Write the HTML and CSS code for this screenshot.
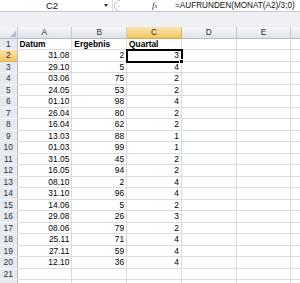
FILE: index.html
```html
<!DOCTYPE HTML>
<html lang="de">
    <head>
        <title>Quartal</title>
        <meta charset="UTF-8">
        <link rel="stylesheet" href="styles.css">
    </head>

    <body>
        <div class="sheet">
            <div class="formulaBar">
                <div class="nameBox"><span class="nameText">C2</span><span class="arrow"></span></div>
                <div class="splitter">
                    <svg width="12" height="12" viewBox="0 0 12 12">
                        <path d="M7 0.5 A5.5 5.5 0 0 0 7 11.5" fill="none" stroke="#b9bec5" stroke-width="1"/>
                        <circle cx="6" cy="6" r="0.7" fill="#b0b5bc"/>
                    </svg>
                </div>
                <div class="fx"><i>f</i><span class="fxSub">x</span></div>
                <div class="formula">=AUFRUNDEN(MONAT(A2)/3;0)</div>
            </div>

            <div class="band"></div>

            <div class="grid">
                <div class="row">
                    <div class="corner"></div>
                    <div class="colHead">A</div>
                    <div class="colHead">B</div>
                    <div class="colHead active">C</div>
                    <div class="colHead">D</div>
                    <div class="colHead">E</div>
                    <div class="colHead"></div>
                </div>
                <div class="row">
                    <div class="rowHead">1</div>
                    <div class="cell bold">Datum</div>
                    <div class="cell bold">Ergebnis</div>
                    <div class="cell bold">Quartal</div>
                    <div class="cell"></div><div class="cell"></div><div class="cell"></div>
                </div>
                <div class="row">
                    <div class="rowHead active">2</div>
                    <div class="cell num">31.08</div><div class="cell num">2</div><div class="cell num selected">3</div>
                    <div class="cell"></div><div class="cell"></div><div class="cell"></div>
                </div>
                <div class="row">
                    <div class="rowHead">3</div>
                    <div class="cell num">29.10</div><div class="cell num">5</div><div class="cell num">4</div>
                    <div class="cell"></div><div class="cell"></div><div class="cell"></div>
                </div>
                <div class="row">
                    <div class="rowHead">4</div>
                    <div class="cell num">03.06</div><div class="cell num">75</div><div class="cell num">2</div>
                    <div class="cell"></div><div class="cell"></div><div class="cell"></div>
                </div>
                <div class="row">
                    <div class="rowHead">5</div>
                    <div class="cell num">24.05</div><div class="cell num">53</div><div class="cell num">2</div>
                    <div class="cell"></div><div class="cell"></div><div class="cell"></div>
                </div>
                <div class="row">
                    <div class="rowHead">6</div>
                    <div class="cell num">01.10</div><div class="cell num">98</div><div class="cell num">4</div>
                    <div class="cell"></div><div class="cell"></div><div class="cell"></div>
                </div>
                <div class="row">
                    <div class="rowHead">7</div>
                    <div class="cell num">26.04</div><div class="cell num">80</div><div class="cell num">2</div>
                    <div class="cell"></div><div class="cell"></div><div class="cell"></div>
                </div>
                <div class="row">
                    <div class="rowHead">8</div>
                    <div class="cell num">16.04</div><div class="cell num">62</div><div class="cell num">2</div>
                    <div class="cell"></div><div class="cell"></div><div class="cell"></div>
                </div>
                <div class="row">
                    <div class="rowHead">9</div>
                    <div class="cell num">13.03</div><div class="cell num">88</div><div class="cell num">1</div>
                    <div class="cell"></div><div class="cell"></div><div class="cell"></div>
                </div>
                <div class="row">
                    <div class="rowHead">10</div>
                    <div class="cell num">01.03</div><div class="cell num">99</div><div class="cell num">1</div>
                    <div class="cell"></div><div class="cell"></div><div class="cell"></div>
                </div>
                <div class="row">
                    <div class="rowHead">11</div>
                    <div class="cell num">31.05</div><div class="cell num">45</div><div class="cell num">2</div>
                    <div class="cell"></div><div class="cell"></div><div class="cell"></div>
                </div>
                <div class="row">
                    <div class="rowHead">12</div>
                    <div class="cell num">16.05</div><div class="cell num">94</div><div class="cell num">2</div>
                    <div class="cell"></div><div class="cell"></div><div class="cell"></div>
                </div>
                <div class="row">
                    <div class="rowHead">13</div>
                    <div class="cell num">08.10</div><div class="cell num">2</div><div class="cell num">4</div>
                    <div class="cell"></div><div class="cell"></div><div class="cell"></div>
                </div>
                <div class="row">
                    <div class="rowHead">14</div>
                    <div class="cell num">31.10</div><div class="cell num">96</div><div class="cell num">4</div>
                    <div class="cell"></div><div class="cell"></div><div class="cell"></div>
                </div>
                <div class="row">
                    <div class="rowHead">15</div>
                    <div class="cell num">14.06</div><div class="cell num">5</div><div class="cell num">2</div>
                    <div class="cell"></div><div class="cell"></div><div class="cell"></div>
                </div>
                <div class="row">
                    <div class="rowHead">16</div>
                    <div class="cell num">29.08</div><div class="cell num">26</div><div class="cell num">3</div>
                    <div class="cell"></div><div class="cell"></div><div class="cell"></div>
                </div>
                <div class="row">
                    <div class="rowHead">17</div>
                    <div class="cell num">08.06</div><div class="cell num">79</div><div class="cell num">2</div>
                    <div class="cell"></div><div class="cell"></div><div class="cell"></div>
                </div>
                <div class="row">
                    <div class="rowHead">18</div>
                    <div class="cell num">25.11</div><div class="cell num">71</div><div class="cell num">4</div>
                    <div class="cell"></div><div class="cell"></div><div class="cell"></div>
                </div>
                <div class="row">
                    <div class="rowHead">19</div>
                    <div class="cell num">27.11</div><div class="cell num">59</div><div class="cell num">4</div>
                    <div class="cell"></div><div class="cell"></div><div class="cell"></div>
                </div>
                <div class="row">
                    <div class="rowHead">20</div>
                    <div class="cell num">12.10</div><div class="cell num">36</div><div class="cell num">4</div>
                    <div class="cell"></div><div class="cell"></div><div class="cell"></div>
                </div>
                <div class="row">
                    <div class="rowHead">21</div>
                    <div class="cell"></div><div class="cell"></div><div class="cell"></div>
                    <div class="cell"></div><div class="cell"></div><div class="cell"></div>
                </div>
                <div class="row">
                    <div class="rowHead"></div>
                    <div class="cell"></div><div class="cell"></div><div class="cell"></div>
                    <div class="cell"></div><div class="cell"></div><div class="cell"></div>
                </div>
            </div>
        </div>
    </body>
</html>
```

FILE: styles.css
```css
html, body
{
    margin: 0;
    background-color: white;
    font-family: "Liberation Sans", Arial, sans-serif;
}

.sheet
{
    width: 300px;
    height: 283px;
    overflow: hidden;
}

/* formula bar at the top */
.formulaBar
{
    display: flex;
    height: 12px;
    box-sizing: border-box;
    border-bottom: 1px solid #c4c9d0;
    background-color: white;
}

.nameBox
{
    display: flex;
    align-items: center;
    width: 113px;
    box-sizing: border-box;
    border-right: 1px solid #d5d9de;
}

.nameText
{
    flex: 1;
    text-align: center;
    font-size: 9.5px;
    line-height: 11px;
    color: #111;
}

.arrow
{
    width: 0;
    height: 0;
    margin-right: 4px;
    border-left: 2.5px solid transparent;
    border-right: 2.5px solid transparent;
    border-top: 3px solid #333;
}

.splitter
{
    width: 32px;
    display: flex;
    align-items: center;
}

.fx
{
    width: 22px;
    font-family: "Liberation Serif", "Times New Roman", serif;
    font-size: 9px;
    line-height: 10px;
    color: #333;
    padding-left: 7px;
    box-sizing: border-box;
}

.fxSub
{
    font-size: 6px;
    font-style: italic;
}

.formula
{
    flex: 1;
    padding-left: 8px;
    font-size: 8.2px;
    line-height: 11px;
    color: #111;
    white-space: nowrap;
}

.band
{
    height: 15px;
    background-color: #eef0f3;
    border-bottom: 0;
}

/* sheet grid */
.row
{
    display: grid;
    grid-template-columns: 17.5px repeat(6, 54.8px);
    height: 11.5px;
}

.row > div
{
    box-sizing: border-box;
    font-size: 8.4px;
    line-height: 10.5px;
    white-space: nowrap;
    overflow: hidden;
}

.corner
{
    position: relative;
    background: linear-gradient(#f5f6f8, #e2e5e9);
    border-right: 1px solid #c3c8cf;
    border-bottom: 1px solid #b6bcc5;
}

.corner::after
{
    content: "";
    position: absolute;
    right: 1px;
    bottom: 1px;
    border-left: 6px solid transparent;
    border-bottom: 6px solid #b9bec6;
}

.colHead
{
    text-align: center;
    color: #27313d;
    background: linear-gradient(#f7f8fa, #dfe2e7);
    border-right: 1px solid #c3c8cf;
    border-bottom: 1px solid #b6bcc5;
}

.colHead.active
{
    background: linear-gradient(#fbe6b2, #f1c35f);
    border-right-color: #e1b25a;
    border-bottom-color: #d9a441;
}

.rowHead
{
    text-align: center;
    color: #27313d;
    background-color: #e6e9ed;
    border-right: 1px solid #b6bcc5;
    border-bottom: 1px solid #f6f7f9;
}

.rowHead.active
{
    background: linear-gradient(#fbe3a6, #f3c765);
    border-bottom-color: #e1b25a;
}

.cell
{
    padding: 0 2px;
    color: black;
    border-right: 1px solid #dadcdd;
    border-bottom: 1px solid #dadcdd;
}

.bold
{
    font-weight: bold;
}

.num
{
    text-align: right;
}

.selected
{
    position: relative;
    overflow: visible !important;
    outline: 2px solid black;
    outline-offset: -1px;
    z-index: 1;
}

/* fill handle */
.selected::after
{
    content: "";
    position: absolute;
    right: -3px;
    bottom: -3px;
    width: 3px;
    height: 3px;
    background-color: black;
    border: 1px solid white;
}
```
